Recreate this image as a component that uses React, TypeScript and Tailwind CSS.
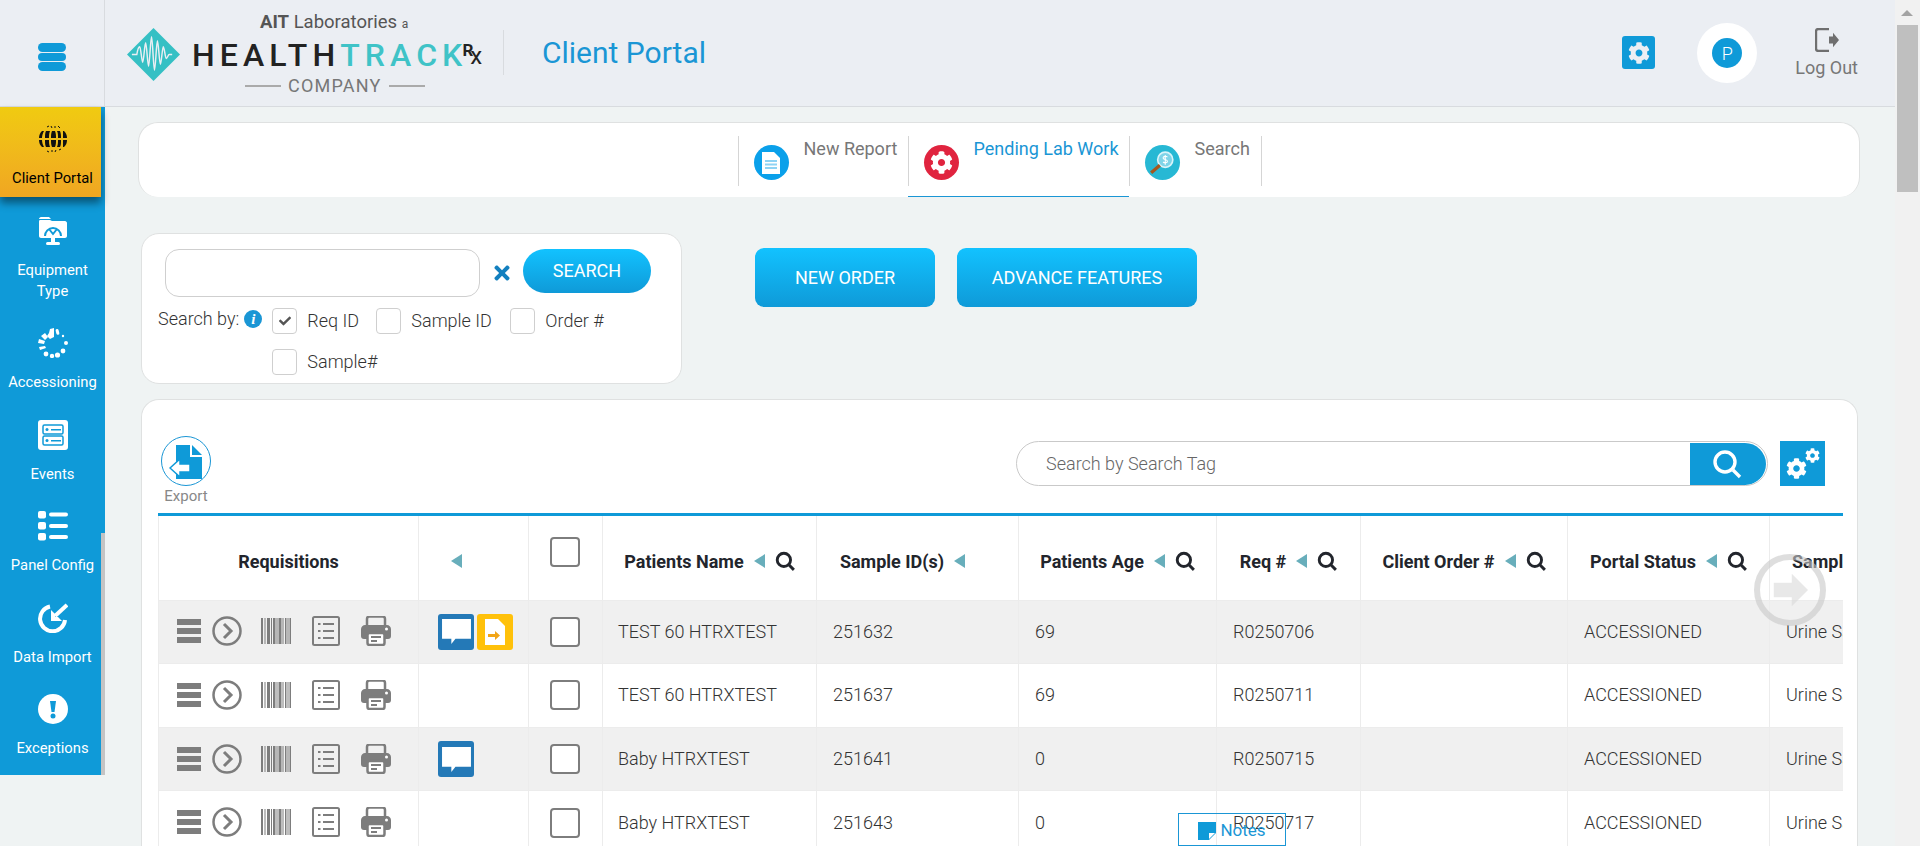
import { FaCog, FaTimes, FaCheck } from "react-icons/fa";

const COLUMNS = [260, 110, 74, 214, 202, 198, 144, 207, 202, 120];

const HEADERS = [
  { label: "Patients Name", search: true },
  { label: "Sample ID(s)", search: false },
  { label: "Patients Age", search: true },
  { label: "Req #", search: true },
  { label: "Client Order #", search: true },
  { label: "Portal Status", search: true },
];

const ROWS = [
  { name: "TEST 60 HTRXTEST", sample: "251632", age: "69", req: "R0250706", comment: true, doc: true },
  { name: "TEST 60 HTRXTEST", sample: "251637", age: "69", req: "R0250711", comment: false, doc: false },
  { name: "Baby HTRXTEST", sample: "251641", age: "0", req: "R0250715", comment: true, doc: false },
  { name: "Baby HTRXTEST", sample: "251643", age: "0", req: "R0250717", comment: false, doc: false },
];

function GlobeIcon() {
  return (
    <svg viewBox="0 0 30 30" className="w-[30px] h-[30px]" fill="#111">
      <path d="M9 3l2-1M13 2l1 2M17 2l0 2M20 2l2 2" stroke="#111" strokeWidth="1" />
      <path d="M9 27l2 1M14 26l0 2M18 26l-1 2M21 26l2-1" stroke="#111" strokeWidth="1" />
      <path d="M1 14c0-3 1-5 3-7l2 0c-1 2-2 4-2 7zM8 7h4c-1 2-1 5-1 7H7c0-3 0-5 1-7zM14 7h3c1 2 1 5 1 7h-5c0-2 0-5 1-7zM19 7h3c1 2 1 5 1 7h-3c0-3 0-5-1-7zM25 7h1c2 2 3 4 3 7h-4c0-3 0-5 0-7z" />
      <path d="M1 16h3c0 3 1 5 2 7H4c-2-2-3-4-3-7zM7 16h4c0 2 0 5 1 7H8c-1-2-1-4-1-7zM13 16h5c0 2 0 5-1 7h-3c-1-2-1-5-1-7zM20 16h3c0 3 0 5-1 7h-3c1-2 1-5 1-7zM25 16h4c0 3-1 5-3 7h-1c0-2 0-4 0-7z" />
    </svg>
  );
}

function EquipmentIcon() {
  return (
    <svg viewBox="0 0 30 30" className="w-[30px] h-[30px]">
      <path d="M1 3c0-1 1-2 2-2h8l2 2H1z" fill="#fff" />
      <path d="M2 4h10l2 1h13c1 0 2 1 2 2v13c0 1-1 2-2 2H3c-1 0-2-1-2-2V6c0-1 0-2 1-2z" fill="#fff" />
      <rect x="13" y="22" width="4" height="4" fill="#fff" />
      <rect x="8" y="26" width="14" height="3" rx="1.5" fill="#fff" />
      <path d="M7 20a8 8 0 0 1 16 0" fill="none" stroke="#0f9ad8" strokeWidth="2" />
      <path d="M11 13l4 5 4-5" fill="none" stroke="#0f9ad8" strokeWidth="2" />
    </svg>
  );
}

function SpinnerIcon() {
  return (
    <svg viewBox="0 0 30 30" className="w-[30px] h-[30px]" fill="#fff">
      <path d="M12 1l4-1v9l-4 2-3-3 2-3z" />
      <path d="M3 8l4-3 3 4-3 3zM0 15l1-4 6 2-1 3zM2 22l-1-3 6-1 1 2z" />
      <rect x="18" y="1" width="3" height="6" rx="1.5" transform="rotate(-15 19 4)" />
      <circle cx="25" cy="8" r="1.2" />
      <circle cx="28" cy="15" r="2" />
      <circle cx="25" cy="23" r="2.4" />
      <circle cx="19.5" cy="27" r="2.6" />
      <circle cx="14" cy="28" r="2.2" />
      <circle cx="8" cy="26" r="2.4" />
    </svg>
  );
}

function EventsIcon() {
  return (
    <svg viewBox="0 0 30 30" className="w-[30px] h-[30px]">
      <rect width="30" height="30" rx="3" fill="#fff" />
      <rect x="5" y="5" width="20" height="9" rx="1.5" fill="none" stroke="#0f9ad8" strokeWidth="1.5" />
      <rect x="5" y="16" width="20" height="9" rx="1.5" fill="none" stroke="#0f9ad8" strokeWidth="1.5" />
      <circle cx="9" cy="9.5" r="1.5" fill="#0f9ad8" />
      <circle cx="9" cy="20.5" r="1.5" fill="#0f9ad8" />
      <rect x="13" y="9" width="10" height="1.5" fill="#0f9ad8" />
      <rect x="13" y="20" width="10" height="1.5" fill="#0f9ad8" />
    </svg>
  );
}

function PanelIcon() {
  return (
    <svg viewBox="0 0 30 30" className="w-[30px] h-[30px]" fill="#fff">
      <rect x="0" y="0" width="8" height="7.5" rx="2" />
      <rect x="0" y="11" width="8" height="7.5" rx="2" />
      <rect x="0" y="22" width="8" height="7.5" rx="2" />
      <rect x="11" y="1.5" width="19" height="4" rx="2" />
      <rect x="11" y="13" width="19" height="4" rx="2" />
      <rect x="11" y="24" width="19" height="4" rx="2" />
    </svg>
  );
}

function ImportIcon() {
  return (
    <svg viewBox="0 0 30 30" className="w-[30px] h-[30px]" fill="none">
      <path d="M12 3.5A12.5 12.5 0 1 0 27 17" stroke="#fff" strokeWidth="4" />
      <path d="M29 2L17 13" stroke="#fff" strokeWidth="4" />
      <path d="M13 7v11h11l-4-4h-3v-3z" fill="#fff" />
    </svg>
  );
}

function AlertIcon() {
  return (
    <svg viewBox="0 0 30 30" className="w-[30px] h-[30px]">
      <circle cx="15" cy="15" r="15" fill="#fff" />
      <path d="M12 7h6l-1.5 11h-3z" fill="#0f9ad8" />
      <circle cx="15" cy="22" r="2.5" fill="#0f9ad8" />
    </svg>
  );
}

function LogoMark() {
  return (
    <svg viewBox="0 0 54 54" className="w-[53px] h-[53px] shrink-0">
      <polygon points="27,0 54,27 27,54 0,27" fill="#35c0c4" />
      <path
        d="M5 27h5c1-6 2-8 3-8s2 16 3 16 2-20 3-20 2 24 3 24 2-30 3-30 2 34 3 34 2-30 3-30 2 24 3 24 2-18 3-18 2 12 3 12 2-4 3-4h3"
        fill="none"
        stroke="#ebeef3"
        strokeWidth="1.5"
      />
    </svg>
  );
}

function Logo() {
  return (
    <div className="relative w-[360px] h-[106px] shrink-0 font-['Roboto',sans-serif]">
      <div className="absolute left-[155px] top-[10px] text-[18.5px] leading-[24px] text-[#555] whitespace-nowrap">
        <span className="font-bold">AIT</span> Laboratories <span className="text-[12px]">a</span>
      </div>
      <div className="absolute left-[22px] top-[28px]">
        <LogoMark />
      </div>
      <div className="absolute left-[87px] top-[36px] flex items-start text-[32px] leading-[38px] font-medium tracking-[5.100px] whitespace-nowrap">
        <span className="text-[#222]">HEALTH</span>
        <span className="text-[#3fc3c7]">TRACK</span>
        <span className="ml-[-5px] mt-[5px] flex items-start text-[#222] tracking-normal">
          <span className="text-[17px] leading-[18px] font-bold">R</span>
          <span className="text-[24px] leading-[24px] ml-[-3px] mt-[3px] font-normal">x</span>
        </span>
      </div>
      <div className="absolute left-[140px] top-[74px] flex items-center gap-[7px] text-[#777] text-[18px] leading-[24px] tracking-[1.200px]">
        <span className="w-[36px] h-[2px] bg-[#aaa]" />
        COMPANY
        <span className="w-[36px] h-[2px] bg-[#aaa]" />
      </div>
    </div>
  );
}

function SideItem({
  label,
  icon,
  className,
}: {
  label: React.ReactNode;
  icon: React.ReactNode;
  className: string;
}) {
  return (
    <div className={`flex flex-col items-center text-center pl-[4px] text-[14.800px] leading-[21px] text-white whitespace-nowrap ${className}`}>
      {icon}
      <div className="mt-[14px]">{label}</div>
    </div>
  );
}

function Sidebar() {
  return (
    <aside className="w-[105px] shrink-0 self-start h-[668px] bg-[#0f9ad8] flex font-['Roboto',sans-serif]">
      <div className="w-[101px] shrink-0">
        <div className="h-[90px] pt-[17px] pl-[4px] flex flex-col items-center bg-gradient-to-b from-[#f0cb10] to-[#f0a622] text-[14.800px] leading-[21px] text-black shadow-[0_6px_8px_rgba(0,0,0,0.45)]">
          <GlobeIcon />
          <div className="mt-[14px] whitespace-nowrap">Client Portal</div>
        </div>
        <SideItem
          className="h-[112px] pt-[19px]"
          icon={<EquipmentIcon />}
          label={
            <>
              Equipment
              <br />
              Type
            </>
          }
        />
        <SideItem className="h-[91.5px] pt-[19px]" icon={<SpinnerIcon />} label="Accessioning" />
        <SideItem className="h-[91.5px] pt-[19px]" icon={<EventsIcon />} label="Events" />
        <SideItem className="h-[91.5px] pt-[19px]" icon={<PanelIcon />} label="Panel Config" />
        <SideItem className="h-[91.5px] pt-[19px]" icon={<ImportIcon />} label="Data Import" />
        <SideItem className="h-[91.5px] pt-[19px]" icon={<AlertIcon />} label="Exceptions" />
      </div>
      <div className="flex-1 flex flex-col">
        <div className="h-[426px]" />
        <div className="flex-1 bg-[#c4c4c4]" />
      </div>
    </aside>
  );
}

function HeaderBar() {
  return (
    <header className="h-[107px] shrink-0 flex items-stretch bg-[#ebeef3] border-b border-[#d8dbdf] font-['Roboto',sans-serif]">
      <div className="w-[105px] shrink-0 border-r border-[#d8dbdf] flex flex-col items-center justify-center gap-[1px] pt-[7px]">
        <span className="w-[28px] h-[9px] rounded-full bg-[#0f9ad8]" />
        <span className="w-[28px] h-[8px] rounded-full bg-[#0f9ad8]" />
        <span className="w-[28px] h-[9px] rounded-full bg-[#0f9ad8]" />
      </div>
      <Logo />
      <div className="w-px h-[45px] mt-[30px] ml-[38px] bg-[#d8dbdf]" />
      <div className="ml-[38px] mt-[35px] text-[30px] leading-[36px] text-[#1a96d5]">Client Portal</div>
      <div className="ml-auto w-[33px] h-[33px] mt-[36px] rounded-[3px] bg-[#0f9ad8] flex items-center justify-center">
        <FaCog className="text-[#ebeef3] text-[22px]" />
      </div>
      <div className="ml-[42px] mt-[23px] w-[60px] h-[60px] rounded-full bg-white flex items-center justify-center">
        <span className="w-[30px] h-[30px] rounded-full bg-[#0f9ad8] flex items-center justify-center text-white text-[18px] font-light">
          P
        </span>
      </div>
      <div className="ml-[38px] mr-[37px] mt-[28px] flex flex-col items-center text-[18px] leading-[24px] text-[#777]">
        <svg viewBox="0 0 24 24" className="w-[24px] h-[24px]" fill="none">
          <path d="M14 1H3.5C2 1 1 2 1 3.5v17C1 22 2 23 3.5 23H14" stroke="#6f6f6f" strokeWidth="2.4" />
          <path d="M14 8.5h4V4.8l6 7.2-6 7.2v-3.7h-4z" fill="#6f6f6f" />
        </svg>
        <span className="mt-[4px]">Log Out</span>
      </div>
    </header>
  );
}

function TabBar() {
  return (
    <div className="h-[75px] w-[1722px] shrink-0 bg-white rounded-[20px] border border-[#dfe1e1] border-b-0 flex justify-center font-['Roboto',sans-serif] text-[18px] leading-[24px]">
      <div className="flex h-[74px] ml-[1px]">
        <div className="w-[170px] relative flex pl-[16px] pt-[22px]">
          <span className="absolute left-0 top-[13px] h-[50px] w-px bg-[#d5d5d5]" />
          <span className="w-[35px] h-[35px] rounded-full bg-[#0aa0ea] flex items-center justify-center shrink-0">
            <svg viewBox="0 0 18 22" className="w-[18px] h-[22px]">
              <path d="M0 0h12l6 6v16H0z" fill="#fff" />
              <path d="M3 8h12v2H3zM3 11.5h12v2H3zM3 15h12v2H3z" fill="#8fd3f4" />
            </svg>
          </span>
          <span className="ml-[15px] mt-[-8px] text-[#777] whitespace-nowrap">New Report</span>
        </div>
        <div className="w-[221px] relative flex pl-[16px] pt-[22px] border-b-[1.5px] border-[#1a96d5]">
          <span className="absolute left-0 top-[13px] h-[50px] w-px bg-[#d5d5d5]" />
          <span className="w-[35px] h-[35px] rounded-full bg-[#e0243f] flex items-center justify-center shrink-0">
            <FaCog className="text-white text-[23px]" />
          </span>
          <span className="ml-[15px] mt-[-8px] text-[#1a96d5] whitespace-nowrap">Pending Lab Work</span>
        </div>
        <div className="w-[133px] relative flex pl-[16px] pt-[22px]">
          <span className="absolute left-0 top-[13px] h-[50px] w-px bg-[#d5d5d5]" />
          <span className="absolute right-0 top-[13px] h-[50px] w-px bg-[#d5d5d5]" />
          <span className="w-[35px] h-[35px] rounded-full bg-[#27b8d4] flex items-center justify-center shrink-0">
            <svg viewBox="0 0 24 24" className="w-[26px] h-[26px]">
              <circle cx="15" cy="9" r="7" fill="#7fd4e8" stroke="#d9f4fa" strokeWidth="1.5" />
              <path d="M15 4.5v9M17 6.5c-1-1-4-1-4 .8s4 1 4 3-3 1.7-4 .8" fill="none" stroke="#fff" strokeWidth="1" />
              <path d="M10 14l-8 7" stroke="#a5571d" strokeWidth="3" />
            </svg>
          </span>
          <span className="ml-[15px] mt-[-8px] text-[#777]">Search</span>
        </div>
      </div>
    </div>
  );
}

function OptionBox({ checked, label, className }: { checked?: boolean; label: string; className?: string }) {
  return (
    <label className={`flex items-center ${className ?? ""}`}>
      <span className="w-[25px] h-[26px] rounded-[4px] border border-[#cfcfcf] bg-white flex items-center justify-center">
        {checked && <FaCheck className="text-[#555] text-[12px]" />}
      </span>
      <span className="ml-[10px] text-[#333] font-light">{label}</span>
    </label>
  );
}

function SearchPanel() {
  return (
    <div className="w-[541px] h-[151px] ml-[3px] shrink-0 bg-white rounded-[18px] border border-[#dfe1e1] font-['Roboto',sans-serif] text-[18px] leading-[24px]">
      <div className="flex items-start ml-[23px] mt-[15px]">
        <div className="w-[315px] h-[48px] rounded-[14px] border border-[#cfcfcf]" />
        <FaTimes className="ml-[11px] mt-[13px] text-[#1380bf] text-[22px]" />
        <button className="ml-[10px] w-[128px] h-[44px] rounded-full bg-gradient-to-b from-[#12c2ff] to-[#0f9ad8] text-white">
          SEARCH
        </button>
      </div>
      <div className="flex mt-[11px] ml-[16px]">
        <span className="text-[#333] font-light mt-[-1px] whitespace-nowrap">Search by:</span>
        <span className="ml-[5px] mt-[2px] w-[18px] h-[18px] shrink-0 rounded-full bg-[#1a96d5] text-white flex items-center justify-center text-[15px] leading-none font-bold italic font-['Liberation_Serif',serif]">
          i
        </span>
        <div className="ml-[10px] w-[340px] flex flex-wrap gap-y-[15px]">
          <OptionBox checked label="Req ID" className="w-[104px]" />
          <OptionBox label="Sample ID" className="w-[134px]" />
          <OptionBox label="Order #" className="w-[100px]" />
          <OptionBox label="Sample#" className="w-[120px]" />
        </div>
      </div>
    </div>
  );
}

function BarcodeIcon() {
  return (
    <svg viewBox="0 0 30 26" className="w-[30px] h-[26px]" fill="#7d7d7d">
      <path d="M0 0h2v26H0zM3.5 0h1v26h-1zM6 0h3v26H6zM10 0h1v26h-1zM12 0h2.5v26H12zM15.5 0h1v26h-1zM17.5 0h3v26h-3zM21.5 0h1v26h-1zM24 0h1.5v26H24zM26.5 0h1v26h-1zM28.5 0h1.5v26h-1.5z" />
    </svg>
  );
}

function PrinterIcon() {
  return (
    <svg viewBox="0 0 30 30" className="w-[30px] h-[30px] ml-[21px]">
      <path d="M6 11V3c0-1.500 1-2.500 2.500-2.500h13C23 .5 24 1.500 24 3v8" fill="none" stroke="#7d7d7d" strokeWidth="2.5" />
      <path d="M4 9h22c2 0 4 2 4 4v7c0 2-1 3-3 3H3c-2 0-3-1-3-3v-7c0-2 2-4 4-4z" fill="#7d7d7d" />
      <circle cx="25.500" cy="13" r="1.500" fill="#fff" />
      <rect x="6.500" y="17" width="17" height="12" rx="2" fill="#fff" stroke="#7d7d7d" strokeWidth="2.500" />
      <path d="M10 21h10M10 25h6" stroke="#7d7d7d" strokeWidth="2" />
    </svg>
  );
}

function RowIcons() {
  return (
    <div className="flex items-center pl-[18px] pb-[1px]">
      <div className="w-[24px] flex flex-col gap-[3px]">
        <span className="h-[6px] bg-[#7d7d7d]" />
        <span className="h-[6px] bg-[#7d7d7d]" />
        <span className="h-[6px] bg-[#7d7d7d]" />
      </div>
      <svg viewBox="0 0 30 30" className="w-[30px] h-[30px] ml-[11px]" fill="none" stroke="#7d7d7d">
        <circle cx="15" cy="15" r="13.5" strokeWidth="2.5" />
        <path d="M12 8l7 7-7 7" strokeWidth="3" />
      </svg>
      <div className="ml-[19px]">
        <BarcodeIcon />
      </div>
      <svg viewBox="0 0 28 30" className="w-[28px] h-[30px] ml-[21px]" fill="none" stroke="#7d7d7d">
        <rect x="1" y="1" width="26" height="28" rx="1.5" strokeWidth="2" />
        <path d="M11 8h11M11 15h11M11 22h11" strokeWidth="2.2" />
        <path d="M6 8h2.5M6 15h2.5M6 22h2.5" strokeWidth="2.2" />
      </svg>
      <PrinterIcon />
    </div>
  );
}

function CommentBadge() {
  return (
    <span className="w-[36px] h-[36px] rounded-[3px] bg-[#2479b7] flex items-center justify-center">
      <svg viewBox="0 0 30 26" className="w-[31px] h-[27px]">
        <path d="M1 1h28v19H14l-4 5v-5H1z" fill="#fff" />
      </svg>
    </span>
  );
}

function DocBadge() {
  return (
    <span className="w-[36px] h-[36px] rounded-[3px] bg-[#ffc10a] flex items-center justify-center">
      <svg viewBox="0 0 20 26" className="w-[20px] h-[26px]">
        <path d="M0 0h13l7 7v19H0z" fill="#fff" />
        <path d="M3 15h7v-3l5 4.500-5 4.500v-3H3z" fill="#f2a516" />
      </svg>
    </span>
  );
}

function SortArrow() {
  return <span className="w-0 h-0 shrink-0 border-y-[7px] border-y-transparent border-r-[11px] border-r-[#68aebb]" />;
}

function HeadSearch({ hidden }: { hidden?: boolean }) {
  return (
    <svg
      viewBox="0 0 18 18"
      className={`w-[20px] h-[20px] shrink-0 ${hidden ? "invisible" : ""}`}
      fill="none"
      stroke="#22252c"
      strokeWidth="2.6"
    >
      <circle cx="8" cy="8" r="6" />
      <path d="M12 12l5 5" />
    </svg>
  );
}

function TablePanel() {
  return (
    <div className="mt-[15px] ml-[3px] w-[1717px] flex-1 bg-white rounded-t-[18px] border border-[#dfe1e1] border-b-0 pl-[16px] pr-[14px] font-['Roboto',sans-serif]">
      <div className="h-[113px] flex items-start">
        <div className="ml-[3px] mt-[36px] flex flex-col items-center">
          <span className="w-[50px] h-[50px] rounded-full border border-[#1a96d5] flex items-center justify-center">
            <svg viewBox="0 0 34 38" className="w-[34px] h-[38px]">
              <path d="M7 3h14v12h12v22H7z" fill="#0f9ad8" />
              <path d="M23 3l10 10H23z" fill="#0f9ad8" />
              <path d="M1 26l10-9v5h10v8H11v5z" fill="#fff" stroke="#0f9ad8" strokeWidth="1.500" />
            </svg>
          </span>
          <span className="text-[15px] leading-[20px] text-[#888]">Export</span>
        </div>
        <div className="ml-auto mt-[41px] mr-[18px] flex items-start">
          <div className="w-[752px] h-[45px] rounded-full border border-[#c9c9c9] flex items-center overflow-hidden pr-[1px]">
            <span className="ml-[29px] text-[18px] font-light text-[#666]">Search by Search Tag</span>
            <span className="ml-auto h-[42px] w-[76px] bg-[#0f9ad8] rounded-r-full flex items-center justify-center pr-[3px]">
              <svg viewBox="0 0 30 30" className="w-[30px] h-[30px]" fill="none" stroke="#fff">
                <circle cx="13" cy="13" r="10" strokeWidth="3.400" />
                <path d="M21 21l7 7" strokeWidth="3.400" />
              </svg>
            </span>
          </div>
          <span className="ml-[12px] w-[45px] h-[45px] bg-[#0f9ad8] flex text-white">
            <FaCog className="text-[21px] self-end mb-[7px] ml-[6px]" />
            <FaCog className="text-[15px] mt-[7px] ml-[-2px]" />
          </span>
        </div>
      </div>
      <div className="h-[3px] bg-[#0f9ad8]" />
      <div className="overflow-hidden">
        <table className="table-fixed border-collapse text-[18px] text-[#333] w-[1731px]">
          <colgroup>
            {COLUMNS.map((w, i) => (
              <col key={i} style={{ width: w }} />
            ))}
          </colgroup>
          <thead>
            <tr className="h-[84px] font-bold text-[#22252c]">
              <th className="border border-[#ececec] border-t-0 pt-[7px]">Requisitions</th>
              <th className="border border-[#ececec] border-t-0 pt-[7px]">
                <div className="flex justify-center pr-[34px]">
                  <SortArrow />
                </div>
              </th>
              <th className="border border-[#ececec] border-t-0 pb-[12px]">
                <div className="flex justify-center pr-[1px]">
                  <span className="w-[30px] h-[30px] rounded-[4px] border-2 border-[#7d7d7d]" />
                </div>
              </th>
              {HEADERS.map((h) => (
                <th key={h.label} className="border border-[#ececec] border-t-0 pt-[7px]">
                  <div className="flex items-center justify-center gap-[10px] whitespace-nowrap">
                    {h.label}
                    <SortArrow />
                    <HeadSearch hidden={!h.search} />
                  </div>
                </th>
              ))}
              <th className="border border-[#ececec] border-t-0 pt-[7px] text-left pl-[22px] whitespace-nowrap">
                Sample Type
              </th>
            </tr>
          </thead>
          <tbody className="font-light">
            {ROWS.map((r, i) => (
              <tr key={r.sample} className={`h-[63.67px] ${i % 2 === 0 ? "bg-[#f0f0f0]" : "bg-white"}`}>
                <td className="border border-[#ececec] p-0">
                  <RowIcons />
                </td>
                <td className="border border-[#ececec] pl-[19px]">
                  <div className="flex gap-[3px]">
                    {r.comment && <CommentBadge />}
                    {r.doc && <DocBadge />}
                  </div>
                </td>
                <td className="border border-[#ececec]">
                  <div className="flex justify-center pr-[1px]">
                    <span className="w-[30px] h-[30px] rounded-[4px] border-2 border-[#7d7d7d] bg-white" />
                  </div>
                </td>
                <td className="border border-[#ececec] pl-[15px] pb-[1px] whitespace-nowrap">{r.name}</td>
                <td className="border border-[#ececec] pl-[16px] pb-[1px]">{r.sample}</td>
                <td className="border border-[#ececec] pl-[16px] pb-[1px]">{r.age}</td>
                <td className="border border-[#ececec] pl-[16px] pb-[1px]">{r.req}</td>
                <td className="border border-[#ececec] pl-[16px]" />
                <td className="border border-[#ececec] pl-[16px] pb-[1px]">ACCESSIONED</td>
                <td className="border border-[#ececec] pl-[16px] pb-[1px] whitespace-nowrap">Urine Sample</td>
              </tr>
            ))}
          </tbody>
        </table>
      </div>
    </div>
  );
}

export default function App() {
  return (
    <div className="relative flex w-[1920px] h-[846px] overflow-hidden bg-[#eff3f3]">
      <div className="flex-1 min-w-0 flex flex-col">
        <HeaderBar />
        <div className="flex flex-1 min-h-0">
          <Sidebar />
          <main className="flex-1 min-w-0 flex flex-col pl-[33px] pt-[15px]">
            <TabBar />
            <div className="flex items-start mt-[36px]">
              <SearchPanel />
              <button className="ml-[73px] mt-[15px] w-[180px] h-[59px] pb-[1px] rounded-[9px] bg-gradient-to-b from-[#12c2ff] to-[#0f9ad8] text-white text-[18px] font-['Roboto',sans-serif]">
                NEW ORDER
              </button>
              <button className="ml-[22px] mt-[15px] w-[240px] h-[59px] pb-[1px] rounded-[9px] bg-gradient-to-b from-[#12c2ff] to-[#0f9ad8] text-white text-[18px] font-['Roboto',sans-serif]">
                ADVANCE FEATURES
              </button>
            </div>
            <TablePanel />
          </main>
        </div>
      </div>

      {/* page scrollbar */}
      <div className="w-[25px] shrink-0 bg-[#f1f1f1] flex flex-col items-center pr-[1px]">
        <span className="mt-[10px] w-0 h-0 border-x-[6px] border-x-transparent border-b-[6px] border-b-[#a3a3a3]" />
        <span className="mt-[9px] w-[21px] h-[167px] bg-[#bfbfbf]" />
      </div>

      {/* next-column overlay */}
      <div className="absolute left-[1754px] top-[554px] w-[72px] h-[72px] rounded-full border-[6px] border-[#c8c8c8]/60 flex items-center justify-center">
        <svg viewBox="0 0 40 36" className="w-[36px] h-[36px]">
          <path d="M2 10h20V0l18 18-18 18V26H2z" fill="#d8d8d8" opacity="0.6" />
        </svg>
      </div>

      {/* notes tab */}
      <div className="absolute left-[1178px] top-[813px] w-[108px] h-[33px] border border-[#1a96d5] flex items-center justify-center gap-[4px] pt-[3px] font-['Roboto',sans-serif] text-[17px] text-[#1a96d5]">
        <svg viewBox="0 0 18 18" className="w-[18px] h-[18px]">
          <path d="M0 0h18v11l-7 7H0z" fill="#0f9ad8" />
          <path d="M11 11h6l-6 6z" fill="#fff" />
        </svg>
        Notes
      </div>
    </div>
  );
}
